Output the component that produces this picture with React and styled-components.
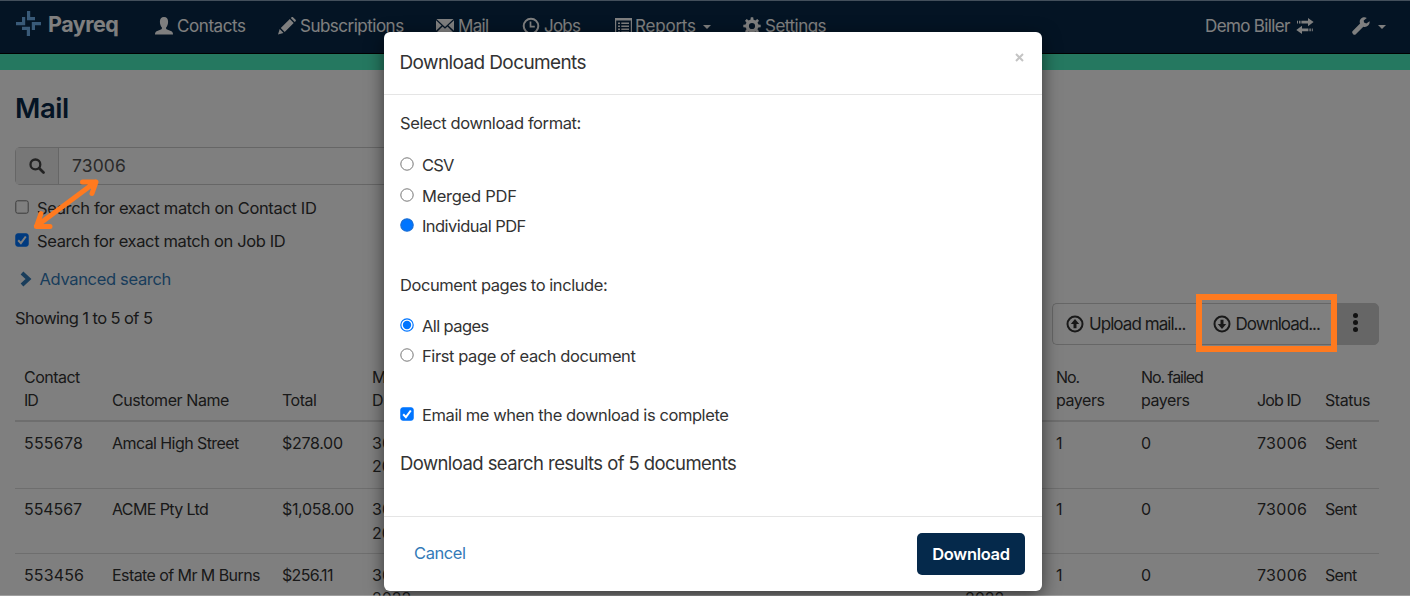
import React from 'react'
import styled, { createGlobalStyle, css } from 'styled-components'

const GlobalStyle = createGlobalStyle`
  * { box-sizing: border-box; }
  body {
    margin: 0;
    overflow: hidden;
    background: #fff;
    color: #333;
    font-family: Inter, "Liberation Sans", sans-serif;
    font-size: 16.5px;
  }
`

const mailRows = [
  { id: ['555678', 0.21], name: ['Amcal High Street', -0.57], total: ['$278.00', -0.3] },
  { id: ['554567', -0.09], name: ['ACME Pty Ltd', -0.62], total: ['$1,058.00', -0.33] },
  { id: ['553456', 0.12], name: ['Estate of Mr M Burns', -0.57], total: ['$256.11', -0.65] },
]

const UserIcon = () => <Icon width="18" height="18" viewBox="0 0 18 18">
  <path d="M9 0C6.3 0 4.9 1.9 4.9 4.8c0 2.3.8 4.6 2 5.7.2 1-.1 1.7-1 2.1L1.6 14.3C.6 14.8 0 15.8 0 17.5h18c0-1.7-.6-2.7-1.6-3.2l-4.3-1.7c-.9-.4-1.2-1.1-1-2.1 1.2-1.1 2-3.4 2-5.7C13.1 1.9 11.7 0 9 0z" />
</Icon>

const PencilIcon = () => <Icon width="18" height="18" viewBox="0 0 18 18">
  <path d="M0 17.6l1.7-5.5 3.8 3.8zM2.8 11L11.8 2l3.900 3.900-9 9zM12.800 1l.8-.8c.4-.4 1-.4 1.400 0l2.600 2.600c.4.4.4 1 0 1.400l-.9.800z" />
</Icon>

const EnvelopeIcon = () => <Icon width="18" height="14" viewBox="0 0 18 14">
  <path d="M.5 0h17L9 8zM0 1.200L5.600 6.600 0 11.800zM18 1.200v10.600l-5.600-5.200zM.5 13.500l6-6L9 9.800l2.500-2.300 6 6z" />
</Icon>

const ClockIcon = () => <Icon width="18" height="18" viewBox="0 0 18 18">
  <circle cx="9" cy="9" r="7.3" fill="none" stroke="currentColor" strokeWidth="2" />
  <path d="M8.500 4.500v5.200h4.300" fill="none" stroke="currentColor" strokeWidth="1.7" />
</Icon>

const ListIcon = () => <Icon width="17" height="17" viewBox="0 0 17 17">
  <path d="M.6.6h15.800v15.800H.6z" fill="none" stroke="currentColor" strokeWidth="1.2" />
  <path d="M0 0h17v2.600H0zM3 4.600h2v1.500H3zM6.300 4.600H14v1.500H6.300zM3 7.600h2v1.500H3zM6.300 7.600H14v1.500H6.300zM3 10.600h2v1.500H3zM6.300 10.600H14v1.500H6.300zM3 13.400h2v1.200H3zM6.300 13.400H14v1.200H6.300z" />
</Icon>

const teeth = [0, 45, 90, 135, 180, 225, 270, 315]
const GearIcon = () => <Icon width="18" height="18" viewBox="0 0 18 18">
  <circle cx="9" cy="9" r="4.8" fill="none" stroke="currentColor" strokeWidth="3.4" />
  {teeth.map(a => <path key={a} d="M7.400 3.500L7.800.3h2.400l.4 3.200z" transform={`rotate(${a} 9 9)`} />)}
</Icon>

const TransferIcon = () => <Icon width="18" height="16" viewBox="0 0 18 16">
  <path d="M12 0l5.600 4.100L12 8.200V5.500H5.400V2.700H12zM3 2.700h1.500v2.800H3zM1 2.700h1v2.800H1zM6 7.800v2.700h6.400v2.800H6V16L.3 11.900zM13.400 10.500h1.400v2.800h-1.400zM15.800 10.500h1v2.800h-1z" />
</Icon>

const WrenchIcon = () => <Icon width="18" height="18" viewBox="0 0 18 18">
  <path d="M17.600 4.300l-3.300 2.100-2.300-.9-.3-2.100L14.800.9C12.900-.1 10.600.2 9.100 1.600 7.700 3 7.400 4.900 8.100 6.600L.7 14c-.7.7-.7 1.900 0 2.600l.5.600c.7.700 1.900.7 2.600 0l7.500-7.500c1.700.6 3.500.2 4.800-1.100 1.200-1.200 1.700-2.800 1.500-4.300z" />
</Icon>

const SearchIcon = () => <Icon width="16" height="16" viewBox="0 0 16 16">
  <circle cx="6.4" cy="6.4" r="4.9" fill="none" stroke="currentColor" strokeWidth="2.3" />
  <path d="M10.200 10.200l4.300 4.300" stroke="currentColor" strokeWidth="2.7" strokeLinecap="round" />
</Icon>

const ArrowCircle = ({down}) => <Icon width="18" height="18" viewBox="0 0 18 18">
  <g transform={down ? 'rotate(180 9 9)' : undefined}>
    <circle cx="9" cy="9" r="7.5" fill="none" stroke="currentColor" strokeWidth="2" />
    <path d="M9 4l4.200 4.900h-2.700v4.300h-3V8.900H4.800z" />
  </g>
</Icon>

const Logo = () => <LogoMark width="25" height="25" viewBox="0 0 25 25">
  <path d="M11 0h3.200v6H19v3.200h-8zM15.800 11H25v3.200h-6V19h-3.200zM6 15.800h8V25h-3.200v-6H6zM6 6h3.200v8.200H0V11h6z" />
</LogoMark>

const Radio = ({checked, solid}) => <Dot width="14" height="14" viewBox="0 0 14 14">
  <circle cx="7" cy="7" r="6.2" fill={solid ? '#0075ff' : '#fff'} stroke={solid ? '#1a6fd6' : checked ? '#0075ff' : '#767676'} strokeWidth={checked ? 1.2 : 1} />
  {checked && <circle cx="7" cy="7" r="4.2" fill="#0075ff" />}
</Dot>

const Check = ({checked}) => <Dot width="14" height="14" viewBox="0 0 14 14">
  <rect x=".8" y=".8" width="12.4" height="12.4" rx="1.8" fill={checked ? '#0075ff' : '#fff'} stroke={checked ? '#0075ff' : '#767676'} />
  {checked && <path d="M3.200 7.300l2.700 2.900 4.900-6.700" fill="none" stroke="#fff" strokeWidth="2" />}
</Dot>

const Option = ({label, ls, children, ...rest}) => <OptionRow {...rest}>
  {children}
  <Text $ls={ls}>{label}</Text>
</OptionRow>

export default function App() {
  return <Page>
    <GlobalStyle />
    <Navbar>
      <Brand>
        <Logo />
        <Text $size={21.5} $weight={700} $ls={-0.5}>Payreq</Text>
      </Brand>
      <NavItem $width={123} $gap={4}><UserIcon /><Text $size={17} $ls={-0.42}>Contacts</Text></NavItem>
      <NavItem $width={158} $gap={4}><PencilIcon /><Text $size={17} $ls={-0.5}>Subscriptions</Text></NavItem>
      <NavItem $width={86} $gap={4}><EnvelopeIcon /><Text $size={17} $ls={-0.67}>Mail</Text></NavItem>
      <NavItem $width={93} $gap={4}><ClockIcon /><Text $size={17} $ls={-0.77}>Jobs</Text></NavItem>
      <NavItem $width={128}><ListIcon /><Text $size={17} $ls={-0.2}>Reports</Text><Caret /></NavItem>
      <NavItem $width={130} $gap={4}><GearIcon /><Text $size={17} $ls={-0.5}>Settings</Text></NavItem>
      <NavRight>
        <NavItem $width={147} $gap={6}><Text $size={17} $ls={-0.64}>Demo Biller</Text><TransferIcon /></NavItem>
        <NavItem $gap={4}><WrenchIcon /><Caret /></NavItem>
      </NavRight>
    </Navbar>
    <Stripe />
    <Main>
      <Heading>Mail</Heading>
      <SearchBox>
        <Addon><SearchIcon /></Addon>
        <SearchValue><Text $size={17.5} $ls={0.12}>73006</Text></SearchValue>
      </SearchBox>
      <Option label="Search for exact match on Contact ID" ls={-0.35} $height={33} $gap={8}><Check /></Option>
      <Option label="Search for exact match on Job ID" ls={-0.37} $height={33} $gap={8}><Check checked /></Option>
      <Advanced>
        <svg width="12" height="16" viewBox="0 0 12 16"><path d="M2 2l6.500 6L2 14" fill="none" stroke="currentColor" strokeWidth="4" /></svg>
        <Text $ls={-0.33}>Advanced search</Text>
      </Advanced>
      <Toolbar>
        <Text $ls={-0.58}>Showing 1 to 5 of 5</Text>
        <ButtonGroup>
          <ToolButton $width={144}><ArrowCircle /><Text $size={17} $ls={-0.94}>Upload mail...</Text></ToolButton>
          <ToolButton $width={140} $pad={15.5}><ArrowCircle down /><Text $size={17} $ls={-0.98}>Download...</Text></ToolButton>
          <MoreButton><i /><i /><i /></MoreButton>
        </ButtonGroup>
      </Toolbar>
      <Table>
        <HeadRow>
          <Cell><Text $ls={-0.53}>Contact</Text><Text $ls={-1}>ID</Text></Cell>
          <Cell><Text $ls={-0.43}>Customer Name</Text></Cell>
          <Cell><Text $ls={-0.49}>Total</Text></Cell>
          <Cell><Text>Mail</Text><Text>Date</Text></Cell>
          <Cell><Text>Due</Text><Text>Date</Text></Cell>
          <Cell><Text $ls={-1.1}>No.</Text><Text $ls={-0.45}>payers</Text></Cell>
          <Cell><Text $ls={-1.05}>No. failed</Text><Text $ls={-0.45}>payers</Text></Cell>
          <Cell><Text $ls={-0.86}>Job ID</Text></Cell>
          <Cell><Text $ls={-0.45}>Status</Text></Cell>
        </HeadRow>
        {mailRows.map(({id, name, total}) => <Row key={id[0]}>
          <Cell><Text $ls={id[1]}>{id[0]}</Text></Cell>
          <Cell><Text $ls={name[1]}>{name[0]}</Text></Cell>
          <Cell><Text $ls={total[1]}>{total[0]}</Text></Cell>
          <Cell><Text>30 Nov</Text><Text>2022</Text></Cell>
          <Cell><Text>30 Nov</Text><Text>2022</Text></Cell>
          <Cell><Text>1</Text></Cell>
          <Cell><Text>0</Text></Cell>
          <Cell><Text $ls={0.29}>73006</Text></Cell>
          <Cell><Text $ls={-0.68}>Sent</Text></Cell>
        </Row>)}
      </Table>
    </Main>
    <Backdrop>
      <Modal>
        <ModalHeader>
          <Text $size={19} $ls={-0.62}>Download Documents</Text>
          <Close width="9" height="9" viewBox="0 0 9 9"><path d="M1 1l7 7M8 1L1 8" /></Close>
        </ModalHeader>
        <ModalBody>
          <Label $height={55} $top={1}><Text $ls={-0.4}>Select download format:</Text></Label>
          <Option label="CSV" ls={-0.82}><Radio /></Option>
          <Option label="Merged PDF" ls={-0.24}><Radio /></Option>
          <Option label="Individual PDF" ls={-0.56}><Radio checked solid /></Option>
          <Label $height={69} $top={17}><Text $ls={-0.44}>Document pages to include:</Text></Label>
          <Option label="All pages" ls={-0.6}><Radio checked /></Option>
          <Option label="First page of each document" ls={-0.41}><Radio /></Option>
          <Option label="Email me when the download is complete" ls={-0.42} $height={87}><Check checked /></Option>
          <Summary><Text $size={18.5} $ls={-0.58}>Download search results of 5 documents</Text></Summary>
        </ModalBody>
        <ModalFooter>
          <Cancel><Text $ls={-0.42}>Cancel</Text></Cancel>
          <Primary><Text $weight={600} $ls={-0.31}>Download</Text></Primary>
        </ModalFooter>
      </Modal>
    </Backdrop>
    <Highlight />
    <Pointer width="72" height="56" viewBox="30 175 72 56">
      <path d="M36.500 226L95.500 182M82.500 182h13.500l-4 11.500M41 213.500l-4.500 13h13.500" />
    </Pointer>
  </Page>
}

const Page = styled.div`
  position: relative;
  width: 1410px;
  height: 596px;
  overflow: hidden;
  background: #fff;
`
const Text = styled.span`
  display: block;
  white-space: nowrap;
  font-size: ${p => p.$size ? p.$size + 'px' : 'inherit'};
  font-weight: ${p => p.$weight || 400};
  letter-spacing: ${p => p.$ls || 0}px;
`
const Icon = styled.svg`
  flex: none;
  fill: currentColor;
`
const Dot = styled.svg`
  flex: none;
  margin-bottom: 2px;
`

const Navbar = styled.div`
  display: flex;
  height: 54px;
  background: #082848;
  color: #fff;
  border-bottom: 1px solid #000;
`
const Brand = styled.div`
  display: flex;
  align-items: center;
  gap: 7.5px;
  width: 155px;
  height: 47px;
  padding-left: 15.5px;
`
const LogoMark = styled.svg`
  fill: #72b4f0;
`
const NavItem = styled.div`
  display: flex;
  align-items: center;
  gap: ${p => p.$gap || 3}px;
  height: 52px;
  width: ${p => p.$width ? p.$width + 'px' : 'auto'};
`
const NavRight = styled.div`
  display: flex;
  margin-left: auto;
  padding-right: 24px;
`
const Caret = styled.i`
  margin: 2px 0 0 4px;
  border: 4px solid transparent;
  border-top-color: currentColor;
  border-bottom: 0;
`
const Stripe = styled.div`
  height: 16px;
  background: #4af0c0;
`

const Main = styled.div`
  padding: 19px 31px 0 15px;
`
const Heading = styled.h1`
  margin: 0;
  height: 58px;
  font-size: 27.5px;
  line-height: 38px;
  font-weight: 600;
  letter-spacing: -0.45px;
  color: #082848;
`
const SearchBox = styled.div`
  display: flex;
  width: 940px;
  height: 38px;
  margin-bottom: 6px;
  border: 1.5px solid #ccc;
  border-radius: 5px;
`
const Addon = styled.div`
  display: flex;
  align-items: center;
  justify-content: center;
  width: 43px;
  color: #444;
  background: #eee;
  border-right: 1px solid #ccc;
`
const SearchValue = styled.div`
  display: flex;
  align-items: center;
  padding: 0 0 2px 13px;
  color: #555;
`
const OptionRow = styled.div`
  display: flex;
  align-items: center;
  gap: ${p => p.$gap || 8}px;
  height: ${p => p.$height || 30.5}px;
`
const Advanced = styled.div`
  display: flex;
  align-items: center;
  gap: 7.5px;
  height: 43px;
  padding-left: 5px;
  color: #337ab7;
`
const Toolbar = styled.div`
  display: flex;
  justify-content: space-between;
  height: 65px;
  line-height: 37px;
`
const ButtonGroup = styled.div`
  display: flex;
  height: 42px;
  margin-top: 3px;
`
const buttonBase = css`
  display: flex;
  align-items: center;
  border: 1px solid #ccc;
`
const ToolButton = styled.div`
  ${buttonBase}
  gap: 5px;
  width: ${p => p.$width}px;
  padding-left: ${p => p.$pad || 13}px;
  border-right: 0;
  &:first-child { border-radius: 5px 0 0 5px; }
`
const MoreButton = styled.div`
  ${buttonBase}
  flex-direction: column;
  gap: 2px;
  width: 43px;
  padding: 8.5px 5px 0 0;
  background: #ccc;
  border-radius: 0 5px 5px 0;
  i {
    width: 5px;
    height: 5px;
    border-radius: 50%;
    background: #222;
  }
`

const Table = styled.div`
  font-size: 16px;
  line-height: 23.5px;
`
const Row = styled.div`
  display: grid;
  grid-template-columns: 88px 170px 90px 593px 91px 85px 116px 68px 63px;
  height: 65.7px;
  padding-top: 9.5px;
  & + & { border-top: 1px solid #ddd; }
`
const HeadRow = styled(Row)`
  height: 57px;
  padding: 0 0 7.5px;
  align-items: end;
  border-bottom: 2px solid #ddd;
  && + ${Row} { border-top: 0; }
`
const Cell = styled.div`
  padding-left: 9px;
`

const Backdrop = styled.div`
  position: absolute;
  inset: 0;
  background: rgba(0,0,0,.5);
  box-shadow: inset 0 1px rgba(255,255,255,.25), inset 0 -1px rgba(255,255,255,.25);
`
const Modal = styled.div`
  width: 658px;
  height: 559px;
  margin: 32px 0 0 383.5px;
  background: #fff;
  border-radius: 6px;
  box-shadow: 0 5px 18px rgba(0,0,0,.55);
`
const ModalHeader = styled.div`
  display: flex;
  justify-content: space-between;
  height: 63px;
  padding: 0 17.5px 0 16px;
  line-height: 61.5px;
  border-bottom: 1.5px solid #e5e5e5;
`
const Close = styled.svg`
  margin-top: 21px;
  fill: none;
  stroke: #c4c4c4;
  stroke-width: 2;
`
const ModalBody = styled.div`
  height: 420.5px;
  padding: 0 16.5px;
`
const Label = styled.div`
  display: flex;
  align-items: center;
  height: ${p => p.$height}px;
  padding-top: ${p => p.$top}px;
`
const Summary = styled.div`
  line-height: 24px;
  margin-top: -8px;
`
const ModalFooter = styled.div`
  display: flex;
  align-items: flex-start;
  justify-content: space-between;
  padding: 16px 16.5px 0 30.5px;
  border-top: 1.5px solid #e5e5e5;
`
const Cancel = styled.div`
  color: #337ab7;
  line-height: 40px;
`
const Primary = styled.div`
  display: flex;
  align-items: center;
  justify-content: center;
  width: 108px;
  height: 42px;
  color: #fff;
  background: #05294b;
  border-radius: 5px;
`

const Highlight = styled.div`
  position: absolute;
  left: 1196px;
  top: 294px;
  width: 141px;
  height: 58px;
  border: 6px solid #ff7a1f;
`
const Pointer = styled.svg`
  position: absolute;
  left: 30px;
  top: 175px;
  fill: none;
  stroke: #ff7a1f;
  stroke-width: 5;
  stroke-linecap: round;
  stroke-linejoin: round;
`
